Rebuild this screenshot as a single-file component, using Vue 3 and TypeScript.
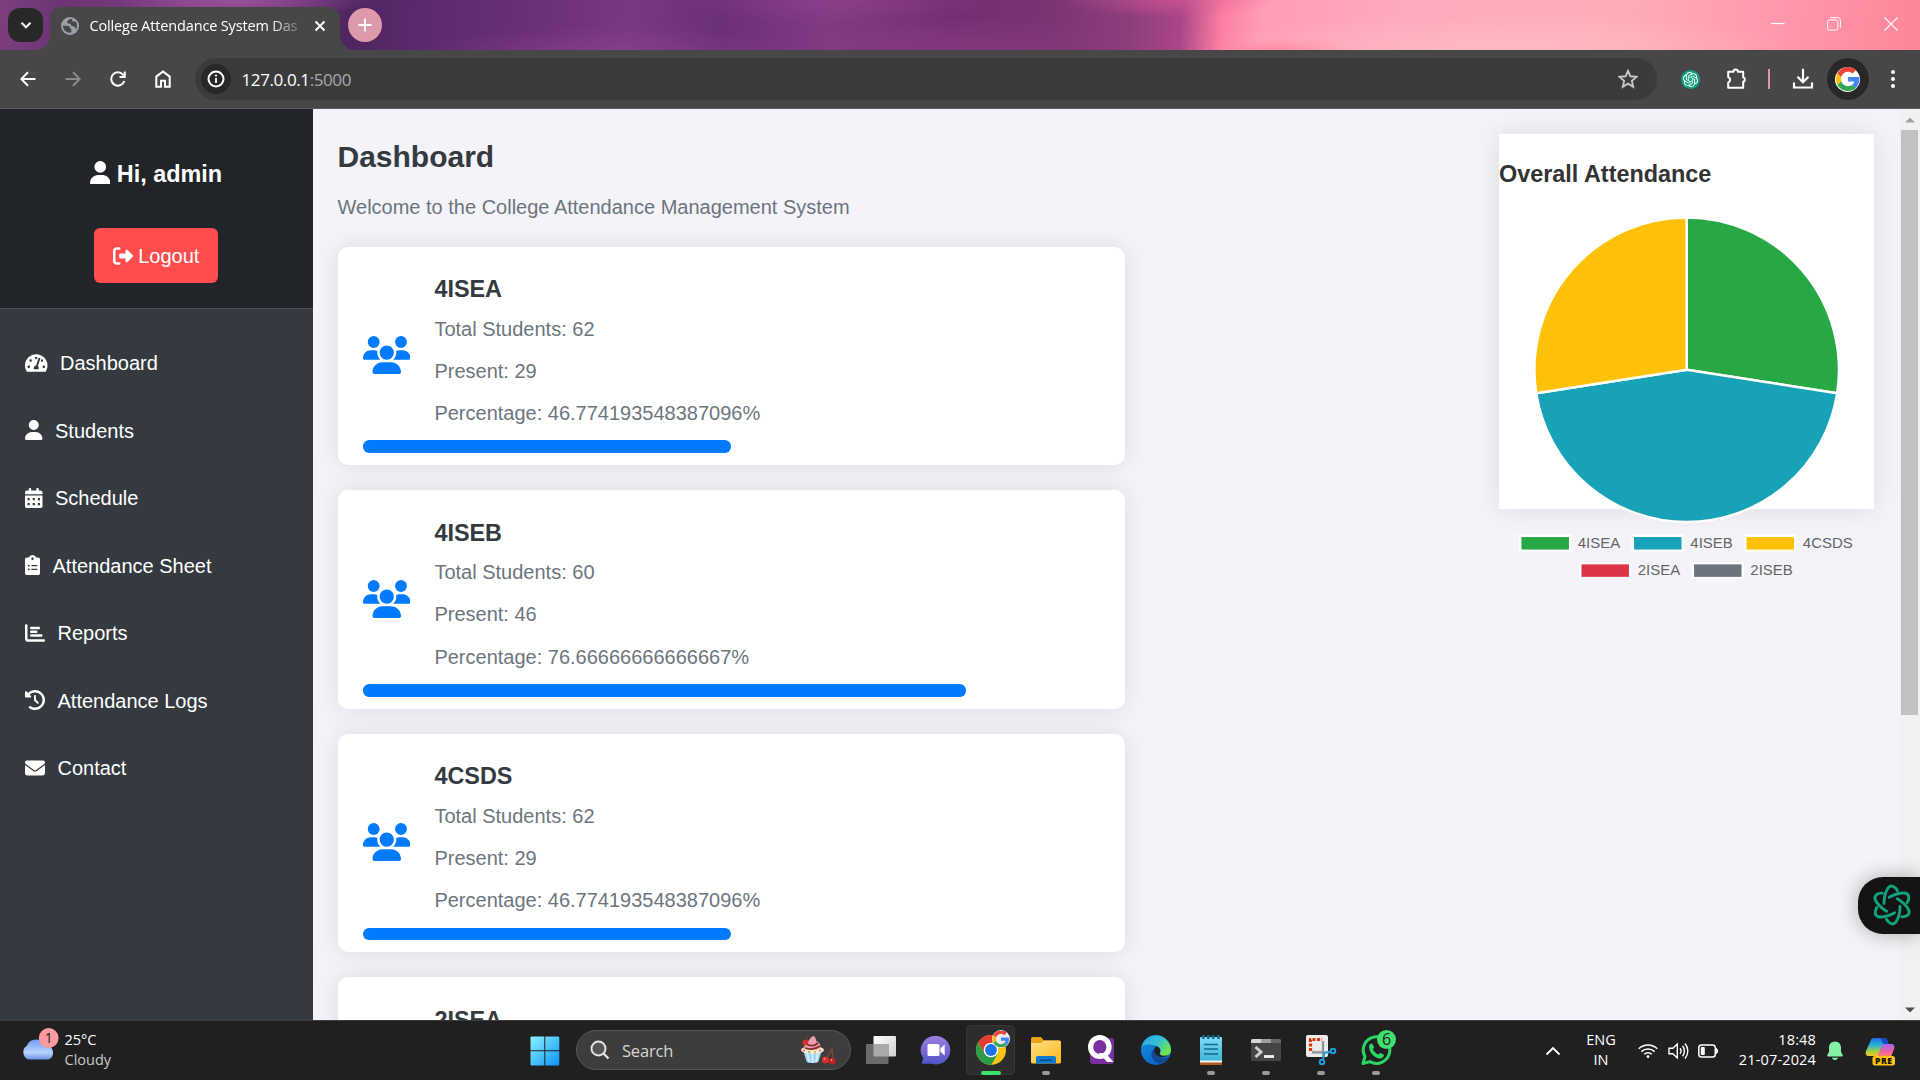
<script setup lang="ts">
interface NavItem {
  label: string
  width: number
  viewBox: string
  path: string
}

interface ClassCard {
  name: string
  stats: string[]
  percentage: number
}

const userPath =
  'M224 256A128 128 0 1 0 224 0a128 128 0 1 0 0 256zm-45.7 48C79.8 304 0 383.8 0 482.3C0 498.7 13.3 512 29.7 512l388.6 0c16.4 0 29.7-13.3 29.7-29.7C448 383.8 368.2 304 269.7 304l-91.4 0z'

const usersPath =
  'M144 0a80 80 0 1 1 0 160A80 80 0 1 1 144 0zM512 0a80 80 0 1 1 0 160A80 80 0 1 1 512 0zM0 298.7C0 239.8 47.8 192 106.7 192l42.7 0c15.9 0 31 3.5 44.6 9.7c-1.3 7.2-1.9 14.7-1.9 22.3c0 38.2 16.8 72.5 43.3 96c-.2 0-.4 0-.7 0L21.3 320C9.6 320 0 310.4 0 298.7zM405.3 320c-.2 0-.4 0-.7 0c26.6-23.5 43.3-57.8 43.3-96c0-7.6-.7-15-1.9-22.3c13.6-6.3 28.7-9.7 44.6-9.7l42.7 0C592.2 192 640 239.8 640 298.7c0 11.8-9.6 21.3-21.3 21.3l-213.3 0zM224 224a96 96 0 1 1 192 0 96 96 0 1 1 -192 0zM128 485.3C128 411.7 187.7 352 261.3 352l117.3 0C452.3 352 512 411.7 512 485.3c0 14.7-11.9 26.7-26.7 26.7l-330.7 0c-14.7 0-26.7-11.9-26.7-26.7z'

const navItems: NavItem[] = [
  {
    label: 'Dashboard',
    width: 22.5,
    viewBox: '0 0 576 512',
    path: 'M288 32C128.94 32 0 160.94 0 320c0 52.8 14.25 102.26 39.06 144.8 5.61 9.62 16.3 15.2 27.44 15.2h443c11.14 0 21.83-5.58 27.44-15.2C561.75 422.26 576 372.8 576 320c0-159.06-128.94-288-288-288zm0 64c14.71 0 26.58 10.13 30.32 23.65-1.11 2.26-2.64 4.23-3.45 6.67l-9.22 27.67c-5.13 3.49-10.97 6.01-17.64 6.01-17.67 0-32-14.33-32-32S270.33 96 288 96zM96 384c-17.67 0-32-14.33-32-32s14.33-32 32-32 32 14.33 32 32-14.33 32-32 32zm48-160c-17.67 0-32-14.33-32-32s14.33-32 32-32 32 14.33 32 32-14.33 32-32 32zm246.77-72.41l-61.33 184C343.13 347.33 352 364.54 352 384c0 11.72-3.38 22.55-8.88 32H232.88c-5.5-9.45-8.88-20.28-8.88-32 0-33.94 26.5-61.43 59.9-63.59l61.34-184.01c4.17-12.56 17.73-19.45 30.36-15.17 12.57 4.19 19.35 17.79 15.17 30.36zm14.66 57.2l15.52-46.55c3.47-1.29 7.13-2.23 11.05-2.23 17.67 0 32 14.33 32 32s-14.33 32-32 32c-11.38-.01-20.89-6.28-26.57-15.22zM480 384c-17.67 0-32-14.33-32-32s14.33-32 32-32 32 14.33 32 32-14.33 32-32 32z',
  },
  { label: 'Students', width: 17.5, viewBox: '0 0 448 512', path: userPath },
  {
    label: 'Schedule',
    width: 17.5,
    viewBox: '0 0 448 512',
    path: 'M128 0c17.7 0 32 14.3 32 32l0 32 128 0 0-32c0-17.7 14.3-32 32-32s32 14.3 32 32l0 32 48 0c26.5 0 48 21.5 48 48l0 48L0 160l0-48C0 85.5 21.5 64 48 64l48 0 0-32c0-17.7 14.3-32 32-32zM0 192l448 0 0 272c0 26.5-21.5 48-48 48L48 512c-26.5 0-48-21.5-48-48L0 192zM64 256v56h56v-56zM196 256v56h56v-56zM328 256v56h56v-56zM64 384v56h56v-56zM196 384v56h56v-56zM328 384v56h56v-56z',
  },
  {
    label: 'Attendance Sheet',
    width: 15,
    viewBox: '0 0 384 512',
    path: 'M192 0c-41.8 0-77.4 26.7-90.5 64L48 64C21.5 64 0 85.5 0 112L0 464c0 26.5 21.5 48 48 48l288 0c26.5 0 48-21.5 48-48l0-352c0-26.5-21.5-48-48-48l-53.5 0C269.4 26.7 233.8 0 192 0zm0 64a32 32 0 1 1 0 64 32 32 0 1 1 0-64zM72 272a24 24 0 1 1 48 0 24 24 0 1 1 -48 0zm104-16l128 0c8.8 0 16 7.2 16 16s-7.2 16-16 16l-128 0c-8.8 0-16-7.2-16-16s7.2-16 16-16zM72 368a24 24 0 1 1 48 0 24 24 0 1 1 -48 0zm88 0c0-8.8 7.2-16 16-16l128 0c8.8 0 16 7.2 16 16s-7.2 16-16 16l-128 0c-8.8 0-16-7.2-16-16z',
  },
  {
    label: 'Reports',
    width: 20,
    viewBox: '0 0 512 512',
    path: 'M32 32c17.7 0 32 14.3 32 32l0 336c0 8.8 7.2 16 16 16l400 0c17.7 0 32 14.3 32 32s-14.3 32-32 32L80 480c-44.2 0-80-35.8-80-80L0 64C0 46.3 14.3 32 32 32zm96 96c0-17.7 14.3-32 32-32l192 0c17.7 0 32 14.3 32 32s-14.3 32-32 32l-192 0c-17.7 0-32-14.3-32-32zm32 64l128 0c17.7 0 32 14.3 32 32s-14.3 32-32 32l-128 0c-17.7 0-32-14.3-32-32s14.3-32 32-32zm0 96l256 0c17.7 0 32 14.3 32 32s-14.3 32-32 32l-256 0c-17.7 0-32-14.3-32-32s14.3-32 32-32z',
  },
  {
    label: 'Attendance Logs',
    width: 20,
    viewBox: '0 0 512 512',
    path: 'M75 75L41 41C25.9 25.9 0 36.6 0 57.9L0 168c0 13.3 10.7 24 24 24l110.1 0c21.4 0 32.1-25.9 17-41l-30.8-30.8C155 85.5 203 64 256 64c106 0 192 86 192 192s-86 192-192 192c-40.8 0-78.6-12.7-109.7-34.4c-14.5-10.1-34.4-6.6-44.6 7.9s-6.6 34.4 7.9 44.6C151.2 495 201.7 512 256 512c141.4 0 256-114.6 256-256S397.4 0 256 0C185.3 0 121.3 28.7 75 75zm181 53c-13.3 0-24 10.7-24 24l0 104c0 6.4 2.5 12.5 7 17l72 72c9.4 9.4 24.6 9.4 33.9 0s9.4-24.6 0-33.9l-65-65 0-94.1c0-13.3-10.7-24-24-24z',
  },
  {
    label: 'Contact',
    width: 20,
    viewBox: '0 0 512 512',
    path: 'M48 64C21.5 64 0 85.5 0 112c0 15.1 7.1 29.3 19.2 38.4L236.8 313.6c11.4 8.5 27 8.5 38.4 0L492.8 150.4c12.1-9.1 19.2-23.3 19.2-38.4c0-26.5-21.5-48-48-48L48 64zM0 176L0 384c0 35.3 28.7 64 64 64l384 0c35.3 0 64-28.7 64-64l0-208L294.4 339.2c-22.8 17.1-54 17.1-76.8 0L0 176z',
  },
]

const cards: ClassCard[] = [
  {
    name: '4ISEA',
    stats: ['Total Students: 62', 'Present: 29', 'Percentage: 46.774193548387096%'],
    percentage: 46.774193548387096,
  },
  {
    name: '4ISEB',
    stats: ['Total Students: 60', 'Present: 46', 'Percentage: 76.66666666666667%'],
    percentage: 76.66666666666667,
  },
  {
    name: '4CSDS',
    stats: ['Total Students: 62', 'Present: 29', 'Percentage: 46.774193548387096%'],
    percentage: 46.774193548387096,
  },
  { name: '2ISEA', stats: [], percentage: 0 },
]

const CARD_WIDTH = 787.5
const barWidth = (p: number): string => `${(p / 100) * CARD_WIDTH}px`

const CX = 187.7
const CY = 160.7
const RADIUS = 152.3
const colors = ['#28a745', '#17a2b8', '#ffc107', '#dc3545', '#6c757d']

function buildSlices(): { d: string; color: string }[] {
  const values = cards.slice(0, 3).map((c) => c.percentage)
  const sum = values.reduce((a, b) => a + b, 0)
  let angle = -Math.PI / 2
  return values.map((value, i) => {
    const next = angle + (value / sum) * Math.PI * 2
    const large = next - angle > Math.PI ? 1 : 0
    const at = (a: number) =>
      `${(CX + RADIUS * Math.cos(a)).toFixed(2)} ${(CY + RADIUS * Math.sin(a)).toFixed(2)}`
    const d = `M${CX} ${CY}L${at(angle)}A${RADIUS} ${RADIUS} 0 ${large} 1 ${at(next)}Z`
    angle = next
    return { d, color: colors[i] }
  })
}

const slices = buildSlices()

const legend = [
  { label: '4ISEA', x: 21.2, y: 326.8 },
  { label: '4ISEB', x: 133.8, y: 326.8 },
  { label: '4CSDS', x: 246.3, y: 326.8 },
  { label: '2ISEA', x: 81.2, y: 354.1 },
  { label: '2ISEB', x: 193.8, y: 354.1 },
]
</script>

<template>
  <div class="screen">
    <svg class="defs" width="0" height="0">
      <defs>
        <symbol id="google-g" viewBox="0 0 48 48">
          <path fill="#4285f4" d="M46.5 24.5c0-1.6-.2-3.2-.4-4.7H24v9h12.7c-.6 2.9-2.3 5.4-4.7 7.1l7.5 5.9c4.4-4.1 7-10.1 7-17.3z" />
          <path fill="#34a853" d="M24 48c6.5 0 11.9-2.1 15.9-5.8l-7.7-6c-2.2 1.5-4.9 2.3-8.2 2.3-6.3 0-11.6-4.2-13.5-9.9l-8 6.2C6.5 42.6 14.6 48 24 48z" />
          <path fill="#fbbc05" d="M10.5 28.6c-1-3-1-6.2 0-9.2l-8-6.2c-3.4 6.7-3.4 14.9 0 21.6z" />
          <path fill="#ea4335" d="M24 9.5c3.5 0 6.7 1.2 9.2 3.6l6.9-6.9C35.9 2.4 30.5 0 24 0 14.6 0 6.5 5.4 2.6 13.2l8 6.2C12.4 13.7 17.7 9.5 24 9.5z" />
        </symbol>
        <symbol id="knot" viewBox="0 0 24 24">
          <path d="M22.282 9.821a5.985 5.985 0 0 0-.516-4.910 6.046 6.046 0 0 0-6.510-2.900A6.065 6.065 0 0 0 4.981 4.182a5.985 5.985 0 0 0-3.998 2.900 6.046 6.046 0 0 0 .743 7.097 5.980 5.980 0 0 0 .511 4.911 6.051 6.051 0 0 0 6.515 2.900A5.985 5.985 0 0 0 13.260 24a6.056 6.056 0 0 0 5.772-4.206 5.990 5.990 0 0 0 3.998-2.900 6.056 6.056 0 0 0-.748-7.073zM13.260 22.430a4.476 4.476 0 0 1-2.876-1.041l.142-.080 4.778-2.758a.795.795 0 0 0 .393-.681v-6.737l2.020 1.169a.071.071 0 0 1 .038.052v5.583a4.504 4.504 0 0 1-4.495 4.493zM3.600 18.304a4.471 4.471 0 0 1-.535-3.014l.142.085 4.783 2.758a.771.771 0 0 0 .781 0l5.843-3.369v2.332a.080.080 0 0 1-.033.062L9.740 19.950a4.499 4.499 0 0 1-6.140-1.646zM2.341 7.896a4.485 4.485 0 0 1 2.365-1.973V11.600a.766.766 0 0 0 .388.677l5.814 3.354-2.020 1.169a.076.076 0 0 1-.071 0l-4.830-2.787A4.504 4.504 0 0 1 2.341 7.872zM18.937 11.751L13.104 8.364 15.119 7.200a.076.076 0 0 1 .071 0l4.830 2.791a4.494 4.494 0 0 1-.676 8.104v-5.677a.790.790 0 0 0-.407-.667zM20.948 8.728l-.142-.085-4.774-2.782a.776.776 0 0 0-.785 0L9.409 9.230V6.897a.066.066 0 0 1 .028-.061l4.830-2.787a4.499 4.499 0 0 1 6.681 4.679zM8.307 12.863l-2.020-1.164a.080.080 0 0 1-.038-.057V6.074a4.499 4.499 0 0 1 7.376-3.454l-.142.081L8.704 5.459a.795.795 0 0 0-.393.681zM9.404 10.498l2.602-1.500 2.607 1.500v2.999l-2.597 1.500-2.607-1.500Z" />
        </symbol>
        <linearGradient id="g-win" x1="0" y1="0" x2="1" y2="1">
          <stop offset="0" stop-color="#8af3ff" /><stop offset="1" stop-color="#0a94f5" />
        </linearGradient>
        <linearGradient id="g-cloud" x1="0" y1="0" x2="0" y2="1">
          <stop offset="0" stop-color="#6f9bf0" /><stop offset=".65" stop-color="#b9d3fb" /><stop offset="1" stop-color="#6e93e6" />
        </linearGradient>
        <linearGradient id="g-meet" x1="0" y1="0" x2="0" y2="1">
          <stop offset="0" stop-color="#9c7fdc" /><stop offset="1" stop-color="#4f55c8" />
        </linearGradient>
        <linearGradient id="g-front" x1="0" y1="0" x2="1" y2="1">
          <stop offset="0" stop-color="#ffffff" /><stop offset="1" stop-color="#d0d0d0" />
        </linearGradient>
        <linearGradient id="g-folder" x1="0" y1="0" x2="1" y2="1">
          <stop offset="0" stop-color="#ffe08a" /><stop offset="1" stop-color="#fdb714" />
        </linearGradient>
        <linearGradient id="g-edge" x1="0" y1="0" x2="1" y2=".6">
          <stop offset="0" stop-color="#2aa6e8" /><stop offset=".55" stop-color="#35c1d4" /><stop offset="1" stop-color="#6ee64a" />
        </linearGradient>
        <linearGradient id="g-edge2" x1="0" y1="0" x2=".6" y2="1">
          <stop offset="0" stop-color="#1490df" /><stop offset="1" stop-color="#0b66c3" />
        </linearGradient>
        <linearGradient id="g-note" x1="0" y1="0" x2="0" y2="1">
          <stop offset="0" stop-color="#7fdcf5" /><stop offset="1" stop-color="#40b4d8" />
        </linearGradient>
        <linearGradient id="g-cop1" x1="0" y1="0" x2="0" y2="1">
          <stop offset="0" stop-color="#1f6fe0" /><stop offset=".4" stop-color="#28b3d6" /><stop offset=".75" stop-color="#a8cf3c" /><stop offset="1" stop-color="#f0c52a" />
        </linearGradient>
        <linearGradient id="g-cop2" x1="0" y1="0" x2="0" y2="1">
          <stop offset="0" stop-color="#a566f0" /><stop offset=".6" stop-color="#ef5fa0" /><stop offset="1" stop-color="#ff8f5e" />
        </linearGradient>
      </defs>
    </svg>

    <header class="tabstrip">
      <div class="tab-search">
        <svg width="14" height="14" viewBox="0 0 14 14"><path d="M2.5 4.8L7 9.300l4.500-4.500" fill="none" stroke="#fff" stroke-width="2" /></svg>
      </div>
      <div class="tab">
        <svg class="globe" width="18" height="18" viewBox="0 0 18 18">
          <circle cx="9" cy="9" r="9" fill="#9aa0a6" />
          <path d="M2 8.500l5.200.4c1.400.2 1.800 1 1.700 2.200l1.400.9v3.200c-4.400 1.500-8.400-2-8.300-6.700zM8.300 2.300c.7-.4 2.200-.3 3.200 0l-.5 1.800 1.400.7 1.900-.6c1 1.200 1.700 2.800 1.700 4.800 0 1.200-.3 2.400-.8 3.300l-1.700-2.500-3.400-1.100-.4-2-2.900-.3-.8-1.700z" fill="#474747" />
        </svg>
        <span class="tab-title">College Attendance System Das</span>
        <svg class="tab-close" width="12" height="12" viewBox="0 0 12 12"><path d="M1.500 1.500l9 9M10.500 1.500l-9 9" stroke="#fff" stroke-width="1.900" /></svg>
      </div>
      <div class="new-tab">
        <svg width="14" height="14" viewBox="0 0 14 14"><path d="M7 .5v13M.5 7h13" stroke="#fff" stroke-width="1.900" /></svg>
      </div>
      <div class="window-controls">
        <svg width="14" height="14" viewBox="0 0 14 14"><path d="M0 6.500h13.500" stroke="#fff" stroke-width="1.200" /></svg>
        <svg width="14" height="14" viewBox="0 0 14 14" fill="none" stroke="#fff"><rect x=".6" y="2.900" width="10.200" height="10.200" rx="1.800" /><path d="M3.400.6h7.200a2.800 2.800 0 0 1 2.800 2.800v7.200" /></svg>
        <svg width="14" height="14" viewBox="0 0 14 14"><path d="M.5.5l13 13M13.500.5l-13 13" stroke="#fff" stroke-width="1.100" /></svg>
      </div>
    </header>

    <div class="toolbar">
      <div class="nav-buttons">
        <svg width="16" height="16" viewBox="0 0 16 16" fill="none" stroke="#fff" stroke-width="2"><path d="M15.500 8H1.500M8 1.300L1.300 8 8 14.700" /></svg>
        <svg width="16" height="16" viewBox="0 0 16 16" fill="none" stroke="#8b8b8b" stroke-width="2"><path d="M.5 8h14M8 1.300L14.700 8 8 14.700" /></svg>
        <svg width="16" height="16" viewBox="0 0 16 16" fill="none" stroke="#fff" stroke-width="2"><path d="M14.300 10A6.700 6.700 0 1 1 13 3.600l1.600 1.800M14.800.6v5.300H9.500" /></svg>
        <svg width="16" height="18" viewBox="0 0 16 18" fill="none" stroke="#fff" stroke-width="2"><path d="M1.300 16.700V6.600L8 1.500l6.700 5.100v10.100H10v-6H6v6z" /></svg>
      </div>
      <div class="omnibox">
        <span class="site-info">
          <svg width="18" height="18" viewBox="0 0 18 18"><circle cx="9" cy="9" r="7.500" fill="none" stroke="#fff" stroke-width="2" /><path d="M9 8v5" stroke="#fff" stroke-width="1.800" /><circle cx="9" cy="5.600" r="1.100" fill="#fff" /></svg>
        </span>
        <span class="url">127.0.0.1<span class="port">:5000</span></span>
        <svg class="star" width="20" height="20" viewBox="0 0 20 20"><path d="M10 1.800l2.400 5.500 6 .6-4.500 4 1.300 5.900-5.200-3.100-5.200 3.100 1.300-5.900-4.500-4 6-.6z" fill="none" stroke="#c7c7c7" stroke-width="1.900" /></svg>
      </div>
      <div class="actions">
        <span class="gpt"><svg width="15" height="15" fill="#fff"><use href="#knot" /></svg></span>
        <svg class="puzzle" width="22" height="22" viewBox="0 0 22 22"><path d="M2.200 3.800h5.300a2.200 2.200 0 0 1 4.400 0h5.300v5.400a2.400 2.400 0 0 1 0 4.600v5.900H2.200v-5.100a3 3 0 0 0 0-5.600z" fill="none" stroke="#fff" stroke-width="2" stroke-linejoin="round" /></svg>
        <span class="divider"></span>
        <svg class="download" width="22" height="22" viewBox="0 0 22 22" fill="none" stroke="#fff" stroke-width="2.200"><path d="M11 .8v13M5.500 8.700l5.500 5.500 5.500-5.500M2 14.500v5h18v-5" /></svg>
        <span class="avatar"><span class="avatar-inner"><svg width="24" height="24"><use href="#google-g" /></svg></span></span>
        <svg class="dots" width="6" height="20" viewBox="0 0 6 20" fill="#fff"><circle cx="3" cy="3" r="2" /><circle cx="3" cy="10" r="2" /><circle cx="3" cy="17" r="2" /></svg>
      </div>
    </div>

    <div class="page">
      <aside class="sidebar">
        <div class="profile">
          <h3 class="greeting">
            <svg width="20.500" height="23.400" viewBox="0 0 448 512" fill="#fff"><path :d="userPath" /></svg>
            <span>Hi, admin</span>
          </h3>
          <a class="logout">
            <svg width="20" height="20" viewBox="0 0 512 512" fill="#fff"><path d="M377.9 105.9L500.7 228.7c7.2 7.2 11.3 17.1 11.3 27.3s-4.1 20.1-11.3 27.3L377.9 406.1c-6.4 6.4-15 9.9-24 9.9c-18.7 0-33.9-15.2-33.9-33.9l0-62.1-128 0c-17.7 0-32-14.3-32-32l0-64c0-17.7 14.3-32 32-32l128 0 0-62.1c0-18.7 15.2-33.9 33.9-33.9c9 0 17.6 3.6 24 9.900zM160 96L96 96c-17.7 0-32 14.3-32 32l0 256c0 17.7 14.3 32 32 32l64 0c17.7 0 32 14.3 32 32s-14.3 32-32 32l-64 0c-53 0-96-43-96-96L0 128C0 75 43 32 96 32l64 0c17.7 0 32 14.3 32 32s-14.3 32-32 32z" /></svg>
            <span>Logout</span>
          </a>
        </div>
        <nav class="menu">
          <a v-for="item in navItems" :key="item.label" class="menu-item">
            <svg :width="item.width" height="20" :viewBox="item.viewBox" fill="#fff"><path fill-rule="evenodd" :d="item.path" /></svg>
            <span>{{ item.label }}</span>
          </a>
        </nav>
      </aside>

      <main class="content">
        <section class="overview">
          <h2 class="title">Dashboard</h2>
          <p class="welcome">Welcome to the College Attendance Management System</p>
          <article v-for="card in cards" :key="card.name" class="card">
            <div class="card-body">
              <svg class="group" width="47.500" height="38" viewBox="0 0 640 512" fill="#007bff"><path :d="usersPath" /></svg>
              <div class="card-text">
                <h3 class="card-title">{{ card.name }}</h3>
                <p v-for="line in card.stats" :key="line">{{ line }}</p>
              </div>
            </div>
            <div class="bar" :style="{ width: barWidth(card.percentage) }"></div>
          </article>
        </section>

        <section class="chart-panel">
          <h3 class="chart-title">Overall Attendance</h3>
          <svg class="chart" width="375" height="380" viewBox="0 0 375 380">
            <path v-for="s in slices" :key="s.d" :d="s.d" :fill="s.color" stroke="#fff" stroke-width="2.500" stroke-linejoin="bevel" />
            <g v-for="(item, i) in legend" :key="item.label">
              <rect :x="item.x" :y="item.y" width="50" height="15" :fill="colors[i]" stroke="#fff" stroke-width="2.500" />
              <text :x="item.x + 57.5" :y="item.y + 12">{{ item.label }}</text>
            </g>
          </svg>
        </section>
      </main>

      <div class="scrollbar">
        <svg width="10" height="6" viewBox="0 0 10 6"><path d="M0 5.500L5 .5l5 5z" fill="#a3a3a3" /></svg>
        <div class="thumb"></div>
        <svg class="down" width="10" height="6" viewBox="0 0 10 6"><path d="M0 .5l5 5 5-5z" fill="#505050" /></svg>
      </div>

      <div class="assistant">
        <svg width="42" height="44" viewBox="-21 -22 42 44" fill="none" stroke="#10a37f" stroke-width="2.900" stroke-linecap="round">
          <path v-for="n in 6" :key="n" :transform="`rotate(${n * 60})`" d="M5.500-14.300C3-19-1-20.500-4-17C-6.500-13-8-8-8-1.500" />
        </svg>
      </div>
    </div>

    <footer class="taskbar">
      <div class="weather">
        <svg width="42" height="40" viewBox="0 0 42 40">
          <path d="M10 38.500a8 8 0 0 1-1-14A9.500 9.500 0 0 1 26.500 24c6 0 8.500 3.500 8.500 8 0 4-2.500 6.500-6 6.500z" transform="translate(-2)" fill="url(#g-cloud)" />
          <circle cx="28.700" cy="17" r="9.900" fill="#ff9aa2" />
          <text x="28.700" y="22" text-anchor="middle" class="badge-text">1</text>
        </svg>
        <div class="weather-text"><span>25°C</span><span class="dim">Cloudy</span></div>
      </div>

      <div class="start">
        <svg width="30" height="30" viewBox="0 0 30 30" fill="url(#g-win)"><path d="M1.500 .5H14.300V14.200H.5V1.500a1 1 0 0 1 1-1zM15.300.5h13a1 1 0 0 1 1 1V14.200H15.300zM.5 15.200H14.300V29.500H1.500a1 1 0 0 1-1-1zM15.300 15.200H29.300V28.500a1 1 0 0 1-1 1H15.300z" /></svg>
      </div>

      <div class="search">
        <svg width="20" height="20" viewBox="0 0 20 20"><circle cx="8.500" cy="8.500" r="7" fill="#555" stroke="#e6e6e6" stroke-width="1.900" /><path d="M13.500 13.500l5 5" stroke="#e6e6e6" stroke-width="2.200" /></svg>
        <span>Search</span>
        <svg class="cupcake" width="36" height="30" viewBox="0 0 36 30">
          <path d="M3 15h19l-3.500 11.500c-2 2-10 2-12 0z" fill="#9fd4f7" /><path d="M7 16l2 11M12.500 16v12M18 16l-2 11" stroke="#d9f0ff" stroke-width="1.600" />
          <ellipse cx="12.500" cy="15" rx="11.500" ry="3.800" fill="#f9e7cf" />
          <path d="M4 13c0-4 3-4 4-6s2-4 5-6c3 .500 2.500 4 3.500 5 3 1.500 4.500 4 3.500 7-4 3-13 3-16 0z" fill="#f19bb5" />
          <path d="M7 9.500c5 2 9 1 11-2M5 13c6 2 11 1 15-2" stroke="#7d3426" stroke-width="1.800" fill="none" />
          <circle cx="5.500" cy="7.500" r="2.800" fill="#dc3030" /><path d="M5.500 5l2-3.500" stroke="#8c4a2a" />
          <path d="M26 24l6-10 1 11" stroke="#8c4a2a" stroke-width="1.100" fill="none" />
          <circle cx="25.500" cy="25" r="3.600" fill="#d92b2b" /><circle cx="32.300" cy="26.200" r="3.200" fill="#c92020" /><circle cx="24.500" cy="23.800" r="1" fill="#ff8f8f" /><circle cx="31.500" cy="25" r=".9" fill="#ff8f8f" />
          <circle cx="4" cy="15.500" r="1" fill="#e74e5c" /><circle cx="9" cy="17" r="1" fill="#6bb55a" /><circle cx="15" cy="17" r="1" fill="#e7a14e" /><circle cx="20" cy="15.500" r="1" fill="#e74e5c" />
        </svg>
      </div>

      <div class="apps">
        <div class="app">
          <svg width="32" height="32" viewBox="0 0 32 32"><rect x="8.500" y="2" width="22.500" height="20.500" rx="1" fill="url(#g-front)" /><rect x="1" y="10" width="22.500" height="20" rx="1" fill="#6a6a6a" /><path d="M8.500 10h15v12.500h-15z" fill="#a9a9a9" /></svg>
        </div>
        <div class="app">
          <svg width="32" height="32" viewBox="0 0 32 32"><path d="M15.800 2A14.200 14.200 0 1 1 12 29.800H1.700l1.500-5.600A14.200 14.200 0 0 1 15.800 2z" fill="url(#g-meet)" /><rect x="7.500" y="10" width="12" height="12" rx="1.500" fill="#fff" /><path d="M20.500 14.200l4.200-3.700v11l-4.200-3.700z" fill="#fff" /></svg>
        </div>
        <div class="app active">
          <svg width="38" height="42" viewBox="0 0 38 42">
            <g transform="translate(19 21)">
              <circle r="15" fill="#fbc116" /><path d="M-13-7.500A15 15 0 0 1 13-7.500L0-7.300-6.400 3.700z" fill="#e33b2e" /><path d="M-13-7.500A15 15 0 0 0 0 15L6.600 3.700H-6.300z" fill="#2a9d48" /><path d="M0 15L6.500 3.700 0 7.500-6.500 3.700z" fill="#2a9d48" />
              <circle r="7.300" fill="#fff" /><circle r="5.900" fill="#1a73e8" />
            </g>
            <circle cx="29" cy="10" r="9" fill="#e8eaed" /><svg x="20.500" y="1.500" width="17" height="17"><use href="#google-g" /></svg>
          </svg>
          <i class="running on"></i>
        </div>
        <div class="app">
          <svg width="32" height="32" viewBox="0 0 32 32"><path d="M1 5a2 2 0 0 1 2-2h8l3 3.500h15a2 2 0 0 1 2 2V14H1z" fill="#e8a317" /><path d="M1 9h10l3-2.500h15a2 2 0 0 1 2 2V28a1.500 1.500 0 0 1-1.500 1.500h-27A1.500 1.500 0 0 1 1 28z" fill="url(#g-folder)" /><path d="M6 29.500V24a2 2 0 0 1 2-2h16a2 2 0 0 1 2 2v5.500z" fill="#0f79cf" /><path d="M10 25.500h12v1.500H10z" fill="#084c8d" /></svg>
          <i class="running"></i>
        </div>
        <div class="app">
          <svg width="32" height="32" viewBox="0 0 32 32"><rect x="5" y="4" width="24" height="26" rx="3" fill="#7b2fa0" /><ellipse cx="14.800" cy="13" rx="9.200" ry="9.500" fill="#7b2fa0" stroke="#fff" stroke-width="5.200" /><path d="M14 19l6.500 0 8 9h-6.500z" fill="#fff" /></svg>
        </div>
        <div class="app">
          <svg width="32" height="32" viewBox="0 0 32 32"><circle cx="16" cy="16" r="15" fill="url(#g-edge2)" /><path d="M1.300 13.500A15 15 0 0 1 31 16c0 4-3.300 6-6.500 6-3.500 0-5.500-1.500-4.500-3 1.500-2.500.5-6.500-4.500-7.500C9.500 10 3.500 9.500 1.300 13.500z" fill="url(#g-edge)" /><path d="M12.500 16c-3 5 0 12.500 8 13.800 4-.8 7-3.800 8.500-7.300-5 3-12.500 2-14-3.500-.300-1.500 0-2.500.5-3.500z" fill="#10489a" /><path d="M15.500 12.500c3.500-.5 5.500 3 4.500 6-1.500 2.500 3 4.500 8 2.500-4 3.500-11 2.500-13-1.500-1-2.500-1-5 .5-7z" fill="#202020" /></svg>
        </div>
        <div class="app">
          <svg width="32" height="32" viewBox="0 0 32 32"><rect x="5" y="25" width="22" height="6" fill="#b05a1c" /><rect x="5" y="26" width="22" height="2.500" fill="#f1f1f1" /><rect x="5" y="3" width="22" height="23.500" rx="1" fill="url(#g-note)" /><path d="M9 10.500h14M9 15h14M9 20h14" stroke="#0e6c8c" stroke-width="1.700" /><path d="M8.500 1v4M13.300 1v4M18.200 1v4M23.500 1v4" stroke="#0f6d90" stroke-width="2.500" /></svg>
          <i class="running"></i>
        </div>
        <div class="app">
          <svg width="32" height="32" viewBox="0 0 32 32"><rect x="1" y="5" width="30" height="22" rx="1.500" fill="#454545" /><path d="M2.500 5H11v4H1V6.500A1.500 1.500 0 0 1 2.500 5z" fill="#d4d4d4" /><path d="M11 5h10v4H11z" fill="#a0a0a0" /><path d="M21 5h8.500A1.500 1.500 0 0 1 31 6.500V9H21z" fill="#686868" /><path d="M5.500 13l5.500 5-5.500 5" fill="none" stroke="#cfcfcf" stroke-width="3" /><path d="M14 22.500h10" stroke="#f2f2f2" stroke-width="2.800" /></svg>
          <i class="running"></i>
        </div>
        <div class="app">
          <svg width="32" height="32" viewBox="0 0 32 32"><rect x="1" y="1" width="22" height="22" rx="2" fill="#ececec" /><path d="M5.500 17V5.500H17" fill="none" stroke="#d83b01" stroke-width="3.200" stroke-dasharray="3 1.500" /><path d="M18 7v11M7 18h11" stroke="#b5b5b5" stroke-width="2.500" /><path d="M18 7v16M7 18.500h17" stroke="#8d959c" stroke-width="2" /><circle cx="28" cy="17" r="2.300" fill="none" stroke="#1f9fe0" stroke-width="2" /><circle cx="17" cy="28" r="2.300" fill="none" stroke="#1f9fe0" stroke-width="2" /><path d="M25.700 17.800l-6 .700-1.700 7" stroke="#1f9fe0" stroke-width="1.900" fill="none" /></svg>
          <i class="running"></i>
        </div>
        <div class="app">
          <svg width="42" height="40" viewBox="0 0 42 40"><path d="M8 33.500l2-6.900a13.300 13.300 0 1 1 5 5z" fill="none" stroke="#2bd467" stroke-width="3" stroke-linejoin="round" /><path d="M14.200 15.500c.8-2 2.500-2.600 3.300-1.500l1.500 3c.4.800-1.200 1.800-1 2.600 1 2.200 2.700 3.800 5 4.800.900.200 1.600-1.700 2.500-1.400l3 1.400c.9.700.4 2.300-1.500 3.500-3 1.500-6.500-.3-9-2.700-2.500-2.500-4.500-6.500-3.800-9.700z" fill="#2bd467" /><circle cx="31.500" cy="9.500" r="9.500" fill="#3fe070" /><text x="31.500" y="15" text-anchor="middle" class="badge-text big">6</text></svg>
          <i class="running"></i>
        </div>
      </div>

      <div class="tray">
        <svg class="chevron" width="16" height="10" viewBox="0 0 16 10"><path d="M1.500 8.500L8 2l6.500 6.500" fill="none" stroke="#fff" stroke-width="1.900" /></svg>
        <div class="lang"><span>ENG</span><span>IN</span></div>
        <svg class="wifi" width="20" height="16" viewBox="0 0 20 16" fill="none" stroke="#fff" stroke-width="1.500"><path d="M.7 5.800a13.200 13.200 0 0 1 18.600 0M3.400 8.600a9.400 9.400 0 0 1 13.200 0M6.200 11.200a5.500 5.500 0 0 1 7.600 0" /><circle cx="10" cy="13.700" r="1.400" fill="#fff" stroke="none" /></svg>
        <svg class="speaker" width="21" height="18" viewBox="0 0 21 18" fill="none" stroke="#fff" stroke-width="1.400"><path d="M1 6.200h3.800L9.300 2v14l-4.500-4.200H1zM12 6.200a4.500 4.500 0 0 1 0 5.600M14.500 3.800a8 8 0 0 1 0 10.400M17 1.500a11.500 11.500 0 0 1 0 15" /></svg>
        <svg class="battery" width="21" height="14" viewBox="0 0 21 14"><rect x=".8" y="1" width="16.500" height="12" rx="2.800" fill="none" stroke="#fff" stroke-width="1.500" /><rect x="2.800" y="3" width="4" height="8" rx="1" fill="#fff" /><path d="M18.300 4.500c1.800.300 1.800 4.700 0 5z" fill="#fff" stroke="#fff" /></svg>
        <div class="clock"><span>18:48</span><span>21-07-2024</span></div>
        <svg class="bell" width="16" height="20" viewBox="0 0 16 20" fill="#83f2a2"><path d="M8 .5c3.800 0 6 2.800 6 6.300v4l1.800 3.500c.2.700-.1 1.200-.8 1.200H1c-.7 0-1-.5-.8-1.200L2 10.800v-4C2 3.300 4.200.5 8 .5zM5 16.800h6c-.6 3-5.400 3-6 0z" /></svg>
        <svg class="copilot" width="32" height="30" viewBox="0 0 32 30">
          <path d="M9 2h10c2 0 3 1 3.500 3l1 3h-4l-5 12H4c-3 0-4-2-3-5L5.500 5C6 3 7 2 9 2z" fill="url(#g-cop1)" /><path d="M15.500 2H19c2 0 3 1 3.500 3l1 3H20c-2 0-3-2-4.500-6z" fill="#1d45c9" />
          <path d="M20 8h6c3 0 4 2 3 5l-3 8H12l4.500-10c.7-2 1.700-3 3.500-3z" fill="url(#g-cop2)" />
          <rect x="7.500" y="20" width="22.500" height="9.500" rx="2.500" fill="#ffc20e" /><text x="18.800" y="27.800" text-anchor="middle" class="pre">PRE</text>
        </svg>
      </div>
    </footer>
  </div>
</template>

<style>
body {
  margin: 0;
  overflow: hidden;
}
</style>

<style scoped>
* {
  box-sizing: border-box;
}
.screen {
  width: 1920px;
  height: 1080px;
  display: flex;
  flex-direction: column;
  overflow: hidden;
  font-family: 'Open Sans', 'Noto Sans', sans-serif;
  color: #fff;
}
.defs {
  position: absolute;
}
svg {
  display: block;
  flex: none;
}
h2, h3, p {
  margin: 0;
}

/* Tab strip */
.tabstrip {
  height: 50px;
  flex: none;
  display: flex;
  align-items: flex-start;
  background:
    radial-gradient(ellipse 130px 16px at 245px 2px, rgba(170, 90, 168, .7), transparent),
    radial-gradient(ellipse 190px 30px at 610px 55px, rgba(145, 70, 145, .55), transparent),
    radial-gradient(ellipse 160px 24px at 840px 0, rgba(150, 68, 145, .5), transparent),
    radial-gradient(ellipse 160px 28px at 950px 44px, rgba(145, 65, 135, .5), transparent),
    radial-gradient(ellipse 110px 18px at 1170px 0, rgba(220, 90, 150, .55), transparent),
    radial-gradient(ellipse 300px 34px at 1500px 48px, rgba(255, 195, 200, .6), transparent),
    radial-gradient(ellipse 70px 12px at 1280px 50px, rgba(255, 120, 150, .7), transparent),
    linear-gradient(93deg, #7b3f80 0, #6d3474 60px, #7d3e84 200px, #4f2560 350px, #5f2a70 440px, #6a2f76 530px, #783980 630px, #6c3078 720px, #803a82 830px, #722d73 950px, #7a3474 1050px, #8e3d7c 1130px, #a9468a 1180px, #ff7fa2 1222px, #ff9db6 1260px, #ffa9bd 1400px, #ffacb8 1620px, #ff98ac 1780px, #ff8598 1920px);
}
.tab-search {
  width: 35px;
  height: 34px;
  margin: 8px 7px 0 8px;
  border-radius: 12px;
  background: #282828;
  display: grid;
  place-items: center;
}
.tab {
  position: relative;
  width: 290px;
  height: 43px;
  margin-top: 7px;
  padding: 0 14px 6px 11px;
  display: flex;
  align-items: center;
  border-radius: 12px 12px 0 0;
  background: #474747;
}
.tab::before,
.tab::after {
  content: '';
  position: absolute;
  bottom: 0;
  width: 14px;
  height: 14px;
}
.tab::before {
  left: -14px;
  background: radial-gradient(circle at 0 0, transparent 13.5px, #474747 14px);
}
.tab::after {
  right: -14px;
  background: radial-gradient(circle at 100% 0, transparent 13.5px, #474747 14px);
}
.tab-title {
  width: 211px;
  margin-left: 10.5px;
  overflow: hidden;
  white-space: nowrap;
  font-size: 14.5px;
  letter-spacing: -.16px;
  mask-image: linear-gradient(90deg, #000 180px, transparent 216px);
}
.tab-close {
  margin-left: auto;
}
.new-tab {
  width: 34px;
  height: 34px;
  margin: 8px 0 0 8px;
  border-radius: 50%;
  background: #dc9aab;
  display: grid;
  place-items: center;
}
.window-controls {
  margin: 17px 22px 0 auto;
  display: flex;
  gap: 42.5px;
}
.window-controls svg:nth-child(2) {
  margin: 0 1px 0 -1px;
}

/* Toolbar */
.toolbar {
  height: 59px;
  flex: none;
  display: flex;
  align-items: flex-start;
  padding-top: 8px;
  background: #474747;
  border-bottom: 1px solid #5f5b5d;
}
.nav-buttons {
  height: 42px;
  width: 195px;
  padding-left: 19.5px;
  display: flex;
  align-items: center;
  gap: 29px;
}
.omnibox {
  width: 1462px;
  height: 42px;
  padding-left: 6px;
  border-radius: 21px;
  background: #3b3b3b;
  display: flex;
  align-items: center;
}
.site-info {
  width: 30px;
  height: 30px;
  border-radius: 50%;
  background: #282828;
  display: grid;
  place-items: center;
}
.url {
  margin-left: 10.5px;
  font-size: 17px;
  letter-spacing: -.4px;
}
.port {
  color: #a9a9a9;
}
.star {
  margin: 0 19.5px 0 auto;
}
.actions {
  flex: 1;
  height: 42px;
  display: flex;
  align-items: center;
}
.gpt {
  width: 19px;
  height: 19px;
  margin-left: 24px;
  border-radius: 50%;
  background: #10a37f;
  display: grid;
  place-items: center;
}
.puzzle {
  margin-left: 26px;
}
.divider {
  width: 2px;
  height: 20px;
  margin-left: 20px;
  background: #dc9aab;
}
.download {
  margin-left: 21.5px;
}
.avatar {
  width: 42px;
  height: 42px;
  margin-left: 13px;
  border-radius: 50%;
  background: #282828;
  display: grid;
  place-items: center;
}
.avatar-inner {
  width: 25px;
  height: 25px;
  border-radius: 50%;
  background: #fff;
  display: grid;
  place-items: center;
}
.dots {
  margin-left: 21px;
}

/* Page */
.page {
  position: relative;
  height: 911px;
  flex: none;
  display: flex;
  overflow: hidden;
  background: #f4f3f9;
  font-family: 'Liberation Sans', Arial, sans-serif;
  font-size: 20px;
}
.sidebar {
  width: 313px;
  flex: none;
  background: #343a40;
}
.profile {
  height: 200px;
  padding: 50px 1px 0 0;
  display: flex;
  flex-direction: column;
  align-items: center;
  background: #212529;
  border-bottom: 1px solid #495057;
}
.greeting {
  height: 30px;
  display: flex;
  align-items: center;
  gap: 6.5px;
  font-size: 23.4px;
}
.greeting svg {
  margin-top: -3px;
}
.greeting span {
  line-height: 30px;
}
.logout {
  width: 124px;
  height: 55px;
  margin-top: 39px;
  display: flex;
  align-items: center;
  justify-content: center;
  gap: 5.6px;
  border-radius: 6.25px;
  background: #ff4d4d;
}
.logout span {
  padding-top: 1px;
}
.menu {
  padding-top: 20.6px;
}
.menu-item {
  height: 67.5px;
  padding-left: 25px;
  display: flex;
  align-items: center;
  gap: 12.5px;
}
.menu-item svg {
  margin-top: -1px;
}
.menu-item span {
  padding-top: .8px;
}
.content {
  flex: 1;
  display: flex;
  align-items: flex-start;
  justify-content: space-between;
  padding: 25px 25px 0 24.5px;
}
.overview {
  width: 787.5px;
  color: #6c757d;
}
.title {
  margin-top: 3px;
  font-size: 30px;
  line-height: 40px;
  color: #343a40;
}
.welcome {
  margin: 15px 0 24.6px;
  line-height: 30px;
}
.card {
  height: 218.6px;
  margin-bottom: 25px;
  padding: 27.4px 25px 0;
  border-radius: 10px;
  background: #fff;
  box-shadow: 0 0 25px rgba(0, 0, 0, .1);
}
.card-body {
  display: flex;
  align-items: center;
  gap: 24.4px;
}
.card-text {
  height: 160.5px;
}
.group {
  margin-top: 2px;
}
.card-title {
  margin-bottom: 3.6px;
  font-size: 23.4px;
  line-height: 30px;
  color: #343a40;
}
.card p {
  line-height: 42.3px;
}
.bar {
  height: 12.5px;
  margin-top: 6px;
  border-radius: 6.25px;
  background: #007bff;
}
.chart-panel {
  width: 375px;
  height: 375px;
  background: #fff;
  box-shadow: 0 0 25px rgba(0, 0, 0, .1);
}
.chart-title {
  padding-top: 24.6px;
  font-size: 23.4px;
  line-height: 30px;
  color: #333;
}
.chart {
  margin-top: 20.4px;
  overflow: visible;
}
.chart text {
  font-size: 15px;
  fill: #666;
}
.scrollbar {
  width: 21px;
  flex: none;
  padding: 8px 0 7px;
  display: flex;
  flex-direction: column;
  align-items: center;
  background: #f1f1f1;
}
.thumb {
  width: 17px;
  height: 585px;
  margin-top: 7px;
  background: #c1c1c1;
}
.down {
  margin-top: auto;
}
.assistant {
  position: absolute;
  right: 0;
  top: 768px;
  width: 62.5px;
  height: 57px;
  padding: 6px 0 0 13px;
  border-radius: 25px 0 0 25px;
  background: #141414;
  box-shadow: 0 0 20px rgba(0, 0, 0, .3);
}

/* Taskbar */
.taskbar {
  height: 60px;
  flex: none;
  display: flex;
  background: #202020;
  border-top: 1px solid #3c3c3c;
  font-size: 14.5px;
  line-height: 20px;
}
.weather {
  width: 517px;
  padding-left: 20px;
  display: flex;
}
.weather-text {
  margin: 9px 0 0 2.5px;
  display: flex;
  flex-direction: column;
}
.dim {
  color: #c8c8c8;
}
.badge-text {
  font-size: 14px;
  fill: #222;
}
.big {
  font-size: 16px;
}
.start {
  width: 59px;
  padding: 14.5px 0 0 12.5px;
}
.search {
  width: 275px;
  height: 40px;
  margin-top: 9px;
  padding: 0 14px 0 13px;
  display: flex;
  align-items: center;
  border: 1px solid #575757;
  border-radius: 20px;
  background: #3d3d3d;
  color: #d6d6d6;
  font-size: 16.5px;
}
.search span {
  margin-left: 12px;
  padding-top: 1px;
  letter-spacing: -.2px;
}
.cupcake {
  margin-left: auto;
}
.apps {
  margin-left: 2px;
  display: flex;
}
.app {
  position: relative;
  width: 49px;
  height: 50px;
  margin: 4px 3px 0;
  display: flex;
  align-items: center;
  justify-content: center;
}
.active {
  border-radius: 5px;
  background: #2d2d2d;
  box-shadow: inset 0 0 0 1px #383838;
}
.running {
  position: absolute;
  bottom: 0;
  left: 20.5px;
  width: 8px;
  height: 4px;
  border-radius: 2px;
  background: #9a9a9a;
}
.on {
  left: 14.5px;
  width: 20px;
  background: #3fe070;
}
.tray {
  margin-left: auto;
  width: 376px;
  height: 59px;
  display: flex;
  align-items: center;
}
.chevron {
  margin-left: 1px;
}
.lang {
  width: 40px;
  margin: 0 17px 0 20px;
  display: flex;
  flex-direction: column;
  align-items: center;
}
.speaker {
  margin-left: 9.5px;
}
.battery {
  margin-left: 9.5px;
}
.clock {
  width: 97px;
  display: flex;
  flex-direction: column;
  align-items: flex-end;
  letter-spacing: .15px;
}
.clock,
.lang {
  margin-top: -1px;
}
.bell {
  margin-left: 11px;
}
.copilot {
  margin-left: 22px;
}
.pre {
  font-size: 8.5px;
  font-weight: 800;
  fill: #111;
  letter-spacing: .6px;
}
</style>
